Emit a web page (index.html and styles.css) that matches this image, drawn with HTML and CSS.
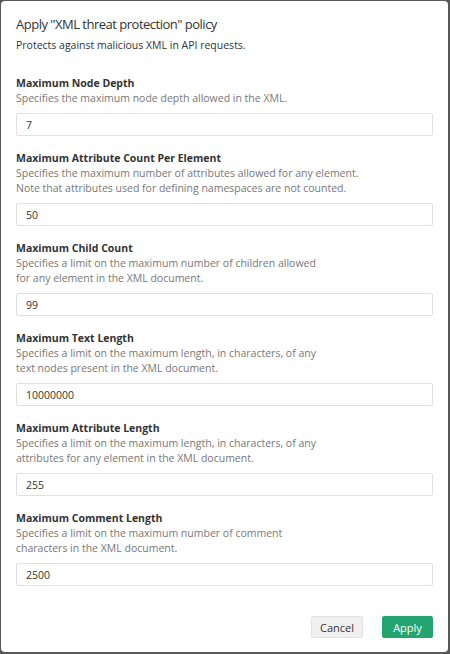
FILE: index.html
```
<!DOCTYPE html>
<html>
<head>
<meta charset="utf-8">
<link rel="stylesheet" href="styles.css">
</head>
<body>
<div class="modal">
  <h1 class="title">Apply "XML threat protection" policy</h1>
  <p class="subtitle">Protects against malicious XML in API requests.</p>
  <div class="fields">
    <div class="field">
      <div class="label">Maximum Node Depth</div>
      <div class="desc">Specifies the maximum node depth allowed in the XML.</div>
      <input class="input" type="text" value="7">
    </div>
    <div class="field">
      <div class="label">Maximum Attribute Count Per Element</div>
      <div class="desc">Specifies the maximum number of attributes allowed for any element.<br>Note that attributes used for defining namespaces are not counted.</div>
      <input class="input" type="text" value="50">
    </div>
    <div class="field">
      <div class="label">Maximum Child Count</div>
      <div class="desc">Specifies a limit on the maximum number of children allowed<br>for any element in the XML document.</div>
      <input class="input" type="text" value="99">
    </div>
    <div class="field">
      <div class="label">Maximum Text Length</div>
      <div class="desc">Specifies a limit on the maximum length, in characters, of any<br>text nodes present in the XML document.</div>
      <input class="input" type="text" value="10000000">
    </div>
    <div class="field">
      <div class="label">Maximum Attribute Length</div>
      <div class="desc">Specifies a limit on the maximum length, in characters, of any<br>attributes for any element in the XML document.</div>
      <input class="input" type="text" value="255">
    </div>
    <div class="field">
      <div class="label">Maximum Comment Length</div>
      <div class="desc">Specifies a limit on the maximum number of comment<br>characters in the XML document.</div>
      <input class="input" type="text" value="2500">
    </div>
  </div>
  <div class="footer">
    <button class="btn btn-cancel">Cancel</button>
    <button class="btn btn-apply">Apply</button>
  </div>
</div>
</body>
</html>
```
FILE: styles.css
```
html, body {
  margin: 0;
  padding: 0;
  background: #585858;
  height: 100%;
}
body {
  font-family: "Open Sans", "Liberation Sans", sans-serif;
  color: #333;
  overflow: hidden;
}
.modal {
  box-sizing: border-box;
  width: 447px;
  height: 651px;
  margin: 1px 0 0 1px;
  background: #fff;
  border-radius: 4px;
  padding: 13px 15px 0 15px;
  display: flex;
  flex-direction: column;
}
.title {
  margin: 0;
  font-size: 13px;
  letter-spacing: -0.5px;
  line-height: 20px;
  font-weight: 400;
  color: #333;
}
.subtitle {
  margin: 3px 0 0 0;
  font-size: 10.5px;
  line-height: 16px;
  color: #333;
}
.fields {
  margin-top: 22px;
  display: flex;
  flex-direction: column;
  gap: 14px;
}
.field {
  display: flex;
  flex-direction: column;
}
.label {
  font-size: 10.5px;
  font-weight: 700;
  line-height: 16px;
  color: #333;
}
.desc {
  font-size: 10.5px;
  line-height: 15px;
  color: #777;
}
.input {
  box-sizing: border-box;
  margin-top: 7px;
  width: 100%;
  height: 23px;
  border: 1px solid #e0e0e0;
  border-radius: 2px;
  padding: 0 9px;
  font-family: "Open Sans", "Liberation Sans", sans-serif;
  font-size: 10.5px;
  color: #333;
  background: #fff;
  outline: none;
}
.footer {
  margin-top: 30px;
  display: flex;
  justify-content: flex-end;
  gap: 19px;
}
.btn {
  box-sizing: border-box;
  height: 22px;
  border-radius: 2px;
  font-family: "Open Sans", "Liberation Sans", sans-serif;
  font-size: 11px;
  padding: 0;
  cursor: pointer;
}
.btn-cancel {
  width: 52px;
  background: #f0f0f0;
  border: 1px solid #e2e2e2;
  color: #333;
}
.btn-apply {
  width: 51px;
  background: #24a46e;
  border: 1px solid #24a46e;
  color: #fff;
}
```
